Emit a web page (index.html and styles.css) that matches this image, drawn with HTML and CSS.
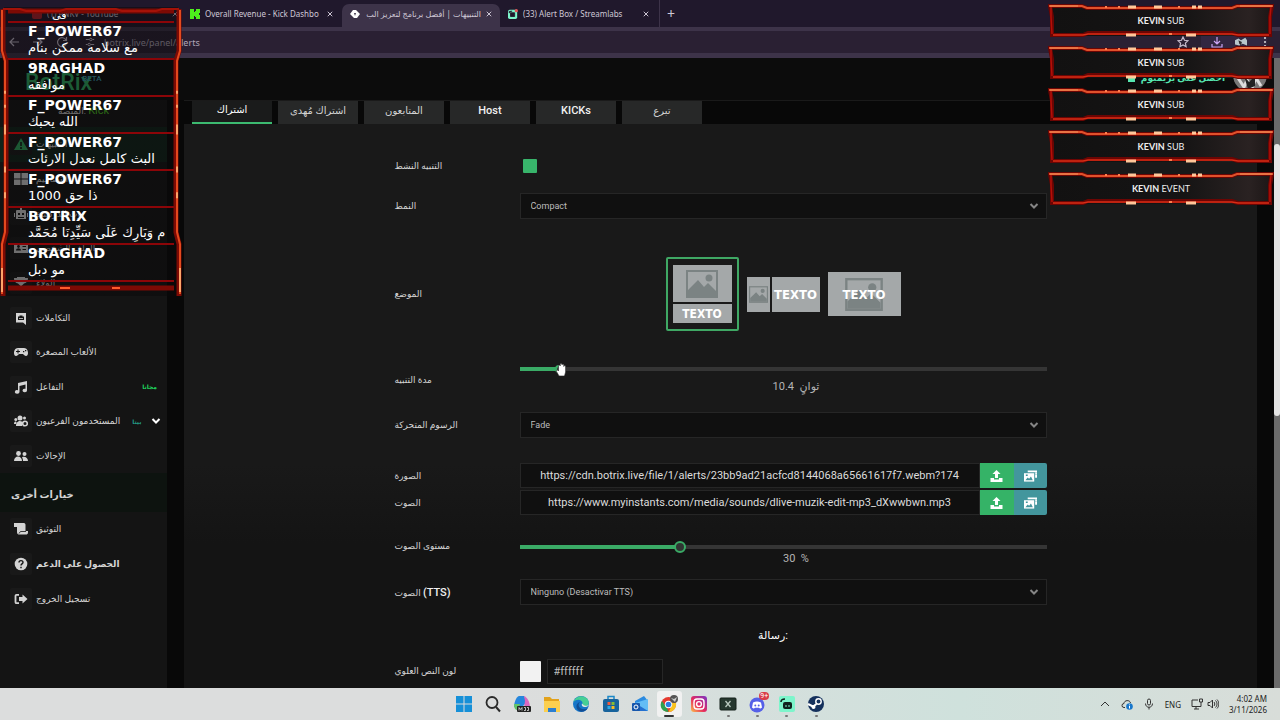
FILE: index.html
```
<!DOCTYPE html>
<html lang="ar">

<head>
  <meta charset="utf-8">
  <title>BotRix</title>
  <link rel="stylesheet" href="styles.css">
</head>

<body>
  <!-- shared shapes -->
  <svg class="defs" width="0" height="0">
    <symbol id="close" viewBox="0 0 8 8"><path d="M1 1l6 6M7 1l-6 6" stroke="currentColor" stroke-width="1.3"/></symbol>
    <symbol id="chevron" viewBox="0 0 10 8"><path d="M1.5 2l3.500 3.500L8.500 2" fill="none" stroke="currentColor" stroke-width="2"/></symbol>
    <symbol id="picture" viewBox="0 0 32 28"><rect x="1" y="1" width="30" height="26" fill="none" stroke="#7b8383" stroke-width="2"/><circle cx="23" cy="8" r="3.500" fill="#7b8383"/><path d="M2 25V20L12 10l6 7 4-4 8 8v5H2z" fill="#7b8383"/></symbol>
    <symbol id="upload" viewBox="0 0 12 12"><path d="M6 0l4 4H7.500v4h-3V4H2zM0 8h3.500v1.500h5V8H12v4H0z" fill="#fff"/></symbol>
    <symbol id="media" viewBox="0 0 14 12"><path d="M4 0h10v8h-2V2H4z" fill="#fff"/><path d="M0 3h11v9H0z" fill="#fff"/><path d="M1.500 10.500l2.500-3 1.500 1.500 2-2.500 2 4zM2 4.500h2v1.500H2zM12.500 2h.8v1h-.8zm0 2h.8v1h-.8z" fill="#43969d"/></symbol>
    <symbol id="frame" viewBox="0 0 226 36" preserveAspectRatio="none">
      <path d="M2 3H34l5 2H184l5-2H224L222 14V32H190l-6-2H40l-5 2H4V14z" fill="none" stroke="#6c0503" stroke-width="4"/>
      <path d="M3 4V14L4 31M223 4l-1 10v17" stroke="#b30f08" stroke-width="1.500" fill="none"/>
      <path d="M1 3H34l5 2H184l5-2H225" fill="none" stroke="#e0512b" stroke-width="2"/>
      <path d="M5 32H35l5-1H184l6 1H221" fill="none" stroke="#d92d16" stroke-width="1.500"/>
      <path d="M2 3H30M192 3H224" stroke="#f0955c" stroke-width="1"/>
      <path d="M80 4h8M106 4h8M144 4h4M150 4h4M78 32h10M138 32h10" stroke="#ffc79a" stroke-width="3"/>
      <path d="M57 4h2M70 4h2M130 4h2M121 31h3" stroke="#ff7d4d" stroke-width="2"/>
    </symbol>
  </svg>

  <div class="tabstrip">
    <div class="btab first"><i class="fav red"></i><span class="btitle">(1) PNKV - YouTube</span><svg class="x"><use href="#close"/></svg></div>
    <div class="btab second">
      <svg class="fav" viewBox="0 0 10 10"><path d="M0 0h4v3h1V2h1V0h4v4H9v2h1v4H6V8H5V7H4v3H0z" fill="#4df01c"/></svg>
      <span class="btitle">Overall Revenue - Kick Dashbo</span><svg class="x"><use href="#close"/></svg>
    </div>
    <div class="btab active">
      <svg class="fav" viewBox="0 0 10 10"><path d="M3 1h3l4 4-3 4H4L0 5z" fill="#fff"/><path d="M4 4l2 0-1 3z" fill="#3d3349"/></svg>
      <span class="btitle" dir="rtl">التنبيهات | أفضل برنامج لتعزيز الب</span><svg class="x"><use href="#close"/></svg>
    </div>
    <div class="btab fourth">
      <svg class="fav" viewBox="0 0 12 12"><rect y="1" width="11" height="11" rx="2" fill="#7df5cb"/><path d="M3 4.500h5v4.500H3zM1.500 5V3L5 2.500" fill="#20182c" stroke="#20182c"/><circle cx="10" cy="2" r="2" fill="#e0565b"/></svg>
      <span class="btitle">(33) Alert Box / Streamlabs</span><svg class="x"><use href="#close"/></svg>
    </div>
    <button class="newtab" aria-label="New tab">+</button>
  </div>

  <div class="toolbar">
    <svg viewBox="0 0 12 12"><path d="M11 6H2M6 2L2 6l4 4" class="line"/></svg>
    <svg viewBox="0 0 12 12"><path d="M1 6h9M6 2l4 4-4 4" class="line"/></svg>
    <svg viewBox="0 0 12 12"><path d="M10 4a4.500 4.500 0 1 0 .5 3M10.500 1v3.500H7" class="line"/></svg>
    <svg class="tune" viewBox="0 0 12 12"><path d="M1 3h4M9 3h2M1 9h2M7 9h4" class="line"/><circle cx="7" cy="3" r="1.500" class="line"/><circle cx="5" cy="9" r="1.500" class="line"/></svg>
    <input class="url" type="text" aria-label="Address" value="botrix.live/panel/alerts">
    <svg class="star" viewBox="0 0 12 12"><path d="M6 1l1.500 3.300 3.500.4-2.600 2.400.7 3.500L6 8.900l-3.100 1.700.7-3.500L1 4.700l3.500-.4z" class="line"/></svg>
    <div class="chip">
      <svg viewBox="0 0 12 12"><path d="M6 1v7M3 5l3 3 3-3M1 8v3h10V8" class="line violet"/></svg>
      <svg viewBox="0 0 14 10"><path d="M0 3l4-2 3 2 5-3 2 3v6l-5-2-4 2-5-1z" fill="#b9c7cb"/><path d="M4 3l4 2-1 4-2-2z" fill="#2a2a2e"/></svg>
      <svg class="dots" viewBox="0 0 4 12"><circle cx="2" cy="2" r="1" fill="#ddd"/><circle cx="2" cy="6" r="1" fill="#ddd"/><circle cx="2" cy="10" r="1" fill="#ddd"/></svg>
    </div>
  </div>

  <div class="page">
    <aside class="sidebar">
      <div class="brand">BotRix<sup>BETA</sup></div>
      <div class="platform">المنصة: <b>Kick</b></div>
      <nav class="menu">
        <a href="#" class="item current"><svg viewBox="0 0 14 14"><path d="M7 1l7 12H0z" fill="#2fa75c"/><path d="M7 5v4M7 10v2" stroke="#111" stroke-width="1.500"/></svg><span>التنبيهات</span></a>
        <a href="#" class="item"><svg viewBox="0 0 14 14"><path d="M0 1h6.500v5.500H0zM7.500 1H14v5.500H7.500zM0 7.500h6.500V13H0zM7.500 7.500H14V13H7.500z"/></svg><span>التصاميم</span></a>
        <a href="#" class="item"><svg viewBox="0 0 14 14"><path d="M6 1h2v2h3a1 1 0 0 1 1 1v8H2V4a1 1 0 0 1 1-1h3zM0 6h1v4H0zM13 6h1v4h-1z"/><path d="M4 6h2v2H4zM8 6h2v2H8zM4 10h6v1H4z" fill="#151515"/></svg><span>بوت الدردشة</span></a>
        <a href="#" class="item"><svg viewBox="0 0 14 14"><path d="M0 2h14v10H0z"/><path d="M2 9.500h5c0-3-5-3-5 0zM8.500 5H12v1H8.500zM8.500 8H12v1H8.500z" fill="#151515"/><circle cx="4.500" cy="5.500" r="1.400" fill="#151515"/></svg><span>الملف الشخصي</span></a>
        <a href="#" class="item"><svg viewBox="0 0 14 14"><path d="M3 1h8v1h3c0 4-2 5-4 5.500L8 9.500V12h2v1H4v-1h2V9.500L4 7.500C2 7 0 6 0 2h3z"/></svg><span>الولاء</span></a>
        <a href="#" class="item"><svg viewBox="0 0 14 14"><path d="M2 2h10v12l-3-2.500H2z"/><path d="M4 5.500h1.500V4.500h3v1H10V9H4z" fill="#151515"/><path d="M5 7h4v.8H5z"/></svg><span>التكاملات</span></a>
        <a href="#" class="item"><svg viewBox="0 0 14 14"><path d="M4 3h6c3 0 4 3 4 5 0 3-2 4-4 2L9 9H5l-1 1c-2 2-4 1-4-2 0-2 1-5 4-5z"/><path d="M3.500 4.500h1V6H6v1H4.500v1.500h-1V7H2V6h1.500zM9 6h1.300v1.300H9zM11 5h1.300v1.300H11z" fill="#151515"/></svg><span>الألعاب المصغرة</span></a>
        <a href="#" class="item"><svg viewBox="0 0 14 14"><path d="M4 3l9-2v9.500a2.200 1.800 0 1 1-1.500-1.700V4.500L5.500 6v6a2.300 1.800 0 1 1-1.500-1.700z"/></svg><span>التفاعل</span><small class="free">مجانا</small></a>
        <a href="#" class="item"><svg viewBox="0 0 14 14"><circle cx="6" cy="4" r="2.500"/><circle cx="1.800" cy="5.500" r="1.500"/><circle cx="10.500" cy="4" r="1.500"/><path d="M2 12c0-6 6-6 7-3l-1 3zM0 10c0-2 1-3 2.500-2L2 10z"/><circle cx="11" cy="9.500" r="2.300" fill="none" stroke="#d4d4d4" stroke-width="1.600"/></svg><span>المستخدمون الفرعيون</span><small class="beta">بيتا</small><svg class="more"><use href="#chevron"/></svg></a>
        <a href="#" class="item"><svg viewBox="0 0 14 14"><circle cx="4.500" cy="4.500" r="2.400"/><circle cx="10.500" cy="5" r="2"/><path d="M0 12c0-6 8-6 8 0zM9 12c0-2-.5-3-1-3.800C11 7 14 9 14 12z"/></svg><span>الإحالات</span></a>
        <h2 class="group">خيارات أخرى</h2>
        <a href="#" class="item"><svg viewBox="0 0 14 14"><path d="M0 1h10c1 0 1.500 1 1.500 2v6H14v1.500c0 1.500-1 2-2 2H5.500C4 12.500 3 12 3 10V5H0z"/><path d="M5 11.500l1.500-2H12" stroke="#151515" stroke-width=".8" fill="none"/></svg><span>التوثيق</span></a>
        <a href="#" class="item"><svg viewBox="0 0 14 14"><circle cx="7" cy="7" r="6.300"/><path d="M5 5.500c0-2.500 4-2.500 4-.2C9 7 7 6.800 7 8.500M7 9.700v1.500" stroke="#151515" stroke-width="1.400" fill="none"/></svg><span class="strong">الحصول على الدعم</span></a>
        <a href="#" class="item"><svg viewBox="0 0 14 14"><path d="M5 2.800H2.500c-1 0-1 .5-1 1v6.400c0 .6 0 1 1 1H5" fill="none" stroke="#d4d4d4" stroke-width="1.800"/><path d="M5 5h3.500V2.500L13.500 7l-5 4.500V9H5z"/></svg><span>تسجيل الخروج</span></a>
      </nav>
    </aside>

    <div class="content">
      <header class="topbar">
        <a href="#" class="support"><i></i>احصل على بريميوم</a>
        <svg class="avatar" viewBox="0 0 34 34"><circle cx="17" cy="17" r="17" fill="#777"/><path d="M5 20l6 9 3-7 5 8 4-10 5 8" fill="none" stroke="#ddd" stroke-width="3"/><path d="M11 18l5 6 6-6v10l-7 3z" fill="#222"/></svg>
      </header>
      <div class="tabs">
        <button class="tab on">اشتراك</button>
        <button class="tab">اشتراك مُهدى</button>
        <button class="tab">المتابعون</button>
        <button class="tab latin">Host</button>
        <button class="tab latin">KICKs</button>
        <button class="tab">تبرع</button>
      </div>
      <form class="panel">
        <div class="row">
          <label for="enabled">التنبيه النشط</label>
          <div class="field"><input type="checkbox" id="enabled" class="check" checked></div>
        </div>
        <div class="row">
          <label for="style">النمط</label>
          <div class="field pick"><select id="style"><option>Compact</option></select><svg class="arrow"><use href="#chevron"/></svg></div>
        </div>
        <div class="row position">
          <span class="name" id="pos">الموضع</span>
          <div class="field layouts" role="radiogroup" aria-labelledby="pos">
            <label class="layout stacked"><input type="radio" name="pos" aria-label="Top" checked><span class="pic"><svg><use href="#picture"/></svg></span><span class="txt">TEXTO</span></label>
            <label class="layout side"><input type="radio" name="pos" aria-label="Side"><span class="pic"><svg><use href="#picture"/></svg></span><span class="txt">TEXTO</span></label>
            <label class="layout over"><input type="radio" name="pos" aria-label="Over"><svg><use href="#picture"/></svg><span class="txt">TEXTO</span></label>
          </div>
        </div>
        <div class="row duration">
          <label for="duration">مدة التنبيه</label>
          <div class="field slider">
            <input type="range" id="duration" min="0" max="150" step="0.1" value="10.4" style="--fill: 8%">
            <output>10.4 &nbsp;ثوانٍ</output>
            <svg class="hand" viewBox="0 0 12 14"><path d="M3 13L.5 8.500C0 7 1.500 6.500 2.500 8V3c0-1.500 1.700-1.500 1.700 0V1.500c0-1.500 1.800-1.500 1.800 0V2c0-1.300 1.800-1.300 1.800 0v1.500c0-1.300 1.800-1.200 1.800.2V9l-1.100 4z" fill="#fff" stroke="#222" stroke-width=".6"/></svg>
          </div>
        </div>
        <div class="row animation">
          <label for="animation">الرسوم المتحركة</label>
          <div class="field pick"><select id="animation"><option>Fade</option></select><svg class="arrow"><use href="#chevron"/></svg></div>
        </div>
        <div class="row image">
          <label for="image">الصورة</label>
          <div class="field file">
            <input type="text" id="image" value="https://cdn.botrix.live/file/1/alerts/23bb9ad21acfcd8144068a65661617f7.webm?174">
            <button type="button" class="up" aria-label="Upload image"><svg><use href="#upload"/></svg></button>
            <button type="button" class="lib" aria-label="Image library"><svg><use href="#media"/></svg></button>
          </div>
        </div>
        <div class="row sound">
          <label for="sound">الصوت</label>
          <div class="field file">
            <input type="text" id="sound" value="https://www.myinstants.com/media/sounds/dlive-muzik-edit-mp3_dXwwbwn.mp3">
            <button type="button" class="up" aria-label="Upload sound"><svg><use href="#upload"/></svg></button>
            <button type="button" class="lib" aria-label="Sound library"><svg><use href="#media"/></svg></button>
          </div>
        </div>
        <div class="row volume">
          <label for="volume">مستوى الصوت</label>
          <div class="field slider">
            <input type="range" id="volume" min="0" max="100" value="30" style="--fill: 30%">
            <output>30 &nbsp;%</output>
          </div>
        </div>
        <div class="row tts">
          <label for="tts">الصوت <span class="latin">(TTS)</span></label>
          <div class="field pick"><select id="tts"><option>Ninguno (Desactivar TTS)</option></select><svg class="arrow"><use href="#chevron"/></svg></div>
        </div>
        <div class="row message"><h3>رسالة:</h3></div>
        <div class="row">
          <label for="color">لون النص العلوي</label>
          <div class="field color"><button type="button" class="swatch" aria-label="Pick color"></button><input type="text" id="color" value="#ffffff"></div>
        </div>
      </form>
    </div>
    <div class="scrollbar"><div class="thumb"></div></div>
  </div>

  <footer class="taskbar">
    <div class="apps">
      <button aria-label="Start"><svg viewBox="0 0 18 18"><path d="M1 1h7.500v7.500H1zM9.500 1H17v7.500H9.500zM1 9.500h7.500V17H1zM9.500 9.500H17V17H9.500z" fill="#1690d8"/></svg></button>
      <button aria-label="Search"><svg viewBox="0 0 18 18"><circle cx="8" cy="7.500" r="5.500" fill="none" stroke="#2a2a2a" stroke-width="1.800"/><path d="M12 12l4 4.500" stroke="#2a2a2a" stroke-width="2"/></svg></button>
      <button aria-label="Copilot"><svg viewBox="0 0 18 18"><path d="M6 1h5l3 6-5 5H1C1 8 3 2 6 1z" fill="#2686dc"/><path d="M11 1c3 1 6 6 6 11l-6 1 1-7z" fill="#d968c0"/><path d="M1 9h6l-2 6c-3 0-4-2-4-6z" fill="#62c46a"/><rect x="4" y="11" width="14" height="6" rx="1" fill="#222"/><path d="M6 15.500v-3l1.500 2 1.500-2v3M11 12.500h1.500v3H11M14 12.500h1.500v3H14" stroke="#fff" stroke-width=".7" fill="none"/></svg></button>
      <button aria-label="Files"><svg viewBox="0 0 18 18"><path d="M1 2h6l2 2h7v12H1z" fill="#e2a21c"/><path d="M1 6h16v11H1z" fill="#fbcf4f"/><path d="M5 13h8v4H5z" fill="#2c7fd0"/></svg></button>
      <button aria-label="Edge"><svg viewBox="0 0 18 18"><circle cx="9" cy="9" r="8" fill="#1676c9"/><path d="M1.500 7C3 1 11-1 15.500 4c2 3 2 7-2.500 7.500-3 0-3-1-2.500-3C11 5 5 3 1.500 7z" fill="#46cf95"/><path d="M8 7c-3 3-1 8 6 7l2-1c-2 3-6 5-9 3-4-3-3-8 1-9z" fill="#114e96"/><path d="M10 8.500c-1 2 1 4 4 3.500 2-.5 3-2 3-3-1 2-4 3-7-.5z" fill="#dce2e1"/></svg></button>
      <button aria-label="Store"><svg viewBox="0 0 18 18"><path d="M6 5V1.500h6V5" fill="none" stroke="#1b88c8" stroke-width="1.500"/><rect x="1" y="4" width="16" height="13" rx="2" fill="#17639c"/><path d="M5.500 7h3v3h-3z" fill="#ef5a3c"/><path d="M9.500 7h3v3h-3z" fill="#86bd33"/><path d="M5.500 11h3v3h-3z" fill="#2daae6"/><path d="M9.500 11h3v3h-3z" fill="#f9bd20"/></svg></button>
      <button aria-label="Outlook"><svg viewBox="0 0 18 18"><path d="M4 6l9-5 4 5v10H4z" fill="#2c8be0"/><path d="M4 8l13-4v12H6z" fill="#63bdf5"/><path d="M4 8l13 8H4z" fill="#2470d0"/><rect x="1" y="8" width="8" height="8" rx="1" fill="#1757ac"/><circle cx="5" cy="12" r="2" fill="none" stroke="#fff"/></svg></button>
      <button class="front" aria-label="Chrome"><svg viewBox="0 0 18 18"><circle cx="8.500" cy="9.500" r="7.500" fill="#e5392f"/><path d="M2 6l5.500 8 1 3C1 17-1 10 2 6z" fill="#2fa04f"/><path d="M16 8c1 5-3 9-7.500 9l3.500-7 0-3z" fill="#f9c31f"/><circle cx="8.500" cy="9.500" r="3.700" fill="#fff"/><circle cx="8.500" cy="9.500" r="2.800" fill="#2f7de1"/><circle cx="14" cy="4" r="4" fill="#555"/><path d="M11 3l3 1 3-2-2 5z" fill="#ccc"/></svg></button>
      <button aria-label="Instagram"><svg viewBox="0 0 18 18"><defs><linearGradient id="ig" x1="0" y1="1" x2="1" y2="0"><stop offset="0" stop-color="#fdc04b"/><stop offset=".45" stop-color="#e5295f"/><stop offset="1" stop-color="#7a35c6"/></linearGradient></defs><rect x="1" y="1" width="16" height="16" rx="3" fill="url(#ig)"/><rect x="4" y="4" width="10" height="10" rx="3" fill="none" stroke="#fff" stroke-width="1.400"/><circle cx="9" cy="9" r="2.400" fill="none" stroke="#fff" stroke-width="1.400"/></svg></button>
      <button class="open" aria-label="Xsplit"><svg viewBox="0 0 18 18"><rect x="1" y="3" width="16" height="12" rx="1" fill="#26382f" stroke="#14201a"/><path d="M6.500 6l5 6M11.500 6l-5 6" stroke="#b9c9bf" stroke-width="1.300"/></svg></button>
      <button class="open" aria-label="Discord"><svg viewBox="0 0 18 18"><circle cx="8" cy="10" r="7.500" fill="#5661e8"/><path d="M4 7.500c3-1.500 5-1.500 8 0l1 5c-2 1.500-2 1-3 .2H6c-1 .8-1 1.300-3-.2z" fill="#fff"/><circle cx="6.300" cy="10.500" r="1" fill="#5661e8"/><circle cx="9.700" cy="10.500" r="1" fill="#5661e8"/></svg><span class="count">9+</span></button>
      <button class="open" aria-label="Streamlabs"><svg viewBox="0 0 18 18"><rect x="1" y="1" width="16" height="16" rx="2" fill="#7df5cb"/><rect x="5" y="7" width="9" height="7" rx="2" fill="#10231e"/><path d="M3 7c0-2 2-3 4-3" stroke="#10231e" stroke-width="1.600" fill="none"/><path d="M8 10v2M11 10v2" stroke="#7df5cb"/></svg></button>
      <button class="open" aria-label="Steam"><svg viewBox="0 0 18 18"><circle cx="9" cy="9" r="8" fill="#14305c"/><circle cx="11.500" cy="6.500" r="2.700" fill="none" stroke="#fff" stroke-width="1.400"/><path d="M1 9l5 2.500L9.500 9" stroke="#fff" stroke-width="2" fill="none"/><circle cx="6.500" cy="12" r="2" fill="#fff"/></svg></button>
    </div>
    <div class="tray">
      <svg viewBox="0 0 12 12"><path d="M2 8l4-4 4 4" class="ink"/></svg>
      <svg viewBox="0 0 12 12"><path d="M4 9.500H3a2 2 0 0 1 0-4C3 2 9 1.500 9.500 5" class="ink"/><circle cx="8.500" cy="8.500" r="3.300" fill="#1878cc"/><path d="M8.500 6.500v.8M8.500 8v2.500" stroke="#fff"/></svg>
      <svg viewBox="0 0 12 12"><rect x="4.500" y="1" width="3" height="6" rx="1.500" class="ink"/><path d="M2.500 5.500c0 5 7 5 7 0M6 9v2.500" class="ink"/></svg>
      <span class="lang">ENG</span>
      <svg viewBox="0 0 12 12"><path d="M7 2H1v6.500h9V6M3 11h5M5 8.500V11M8.500 1h3v3h-3zM10 4v2" class="ink"/></svg>
      <svg viewBox="0 0 12 12"><path d="M1 4.500h2L5.500 2v8L3 7.500H1zM7 4c1 1 1 3 0 4M8.500 2.500c2 2 2 5 0 7M10 1.500c2.500 3 2.500 6 0 9" class="ink"/></svg>
      <time class="clock">4:02 AM<br>3/11/2026</time>
    </div>
  </footer>

  <!-- stream overlays -->
  <section class="chat">
    <svg class="chatframe" viewBox="0 0 182 290" preserveAspectRatio="none">
      <path d="M8 4H174M3 2V44L6 54V226L3 238V290M179 2V44L176 54V226L179 238V290M8 282H174" fill="none" stroke="#7c0a04" stroke-width="5"/>
      <path d="M2 3V44L5 54V226L2 238V288M180 3V44L177 54V226L180 238V288" fill="none" stroke="#e4491e" stroke-width="2"/>
      <path d="M3 2H20L26 4H60L66 2H116L122 4H156L162 2H179" fill="none" stroke="#a51208" stroke-width="2"/>
      <path d="M5 84v3M5 98v3M5 118v10M5 160v6M5 186v6M2 262v24M177 84v3M177 98v3M177 118v10M177 160v6M177 186v6M180 262v24" stroke="#ffa468" stroke-width="2"/>
      <path d="M60 282h10M112 282h8" stroke="#ff5b2b" stroke-width="2"/>
    </svg>
    <div class="msg cut"><p dir="rtl">في</p></div>
    <div class="msg"><b>F_POWER67</b><p dir="rtl">مع سلامه ممكن بنام</p></div>
    <div class="msg"><b>9RAGHAD</b><p dir="rtl">موافقه</p></div>
    <div class="msg"><b>F_POWER67</b><p dir="rtl">الله يحبك</p></div>
    <div class="msg"><b>F_POWER67</b><p dir="rtl">البث كامل نعدل الارئات</p></div>
    <div class="msg"><b>F_POWER67</b><p dir="rtl">ذا حق 1000</p></div>
    <div class="msg"><b>BOTRIX</b><p dir="rtl">م وَبَارِك عَلَى سَيِّدِنَا مُحَمَّد</p></div>
    <div class="msg"><b>9RAGHAD</b><p dir="rtl">مو دبل</p></div>
  </section>

  <section class="alerts">
    <div class="alert"><svg><use href="#frame"/></svg><b>KEVIN</b> SUB</div>
    <div class="alert"><svg><use href="#frame"/></svg><b>KEVIN</b> SUB</div>
    <div class="alert"><svg><use href="#frame"/></svg><b>KEVIN</b> SUB</div>
    <div class="alert"><svg><use href="#frame"/></svg><b>KEVIN</b> SUB</div>
    <div class="alert"><svg><use href="#frame"/></svg><b>KEVIN</b> EVENT</div>
  </section>
</body>

</html>
```
FILE: styles.css
```
* {
  box-sizing: border-box;
}

body {
  margin: 0;
  height: 100vh;
  display: flex;
  flex-direction: column;
  overflow: hidden;
  position: relative;
  background: #080808;
  color: #d4d4d4;
  font-family: Roboto, "DejaVu Sans", sans-serif;
  font-size: 9px;
}

button,
input,
select {
  font-family: inherit;
  font-size: inherit;
  color: inherit;
  margin: 0;
  padding: 0;
  border: 0;
  background: none;
}

a {
  color: inherit;
  text-decoration: none;
}

.defs {
  position: absolute;
}

/* browser */
.tabstrip {
  display: flex;
  height: 27px;
  background: #20182c;
  color: #cfc8d6;
  font-family: "Noto Sans", "DejaVu Sans", sans-serif;
  font-size: 8px;
}

.btab {
  display: flex;
  align-items: center;
  gap: 5px;
  padding: 0 6px;
}

.btitle {
  flex: 1;
  overflow: hidden;
  white-space: nowrap;
}

.fav {
  width: 10px;
  height: 10px;
  flex: none;
}

.red {
  background: #b3202c;
  border-radius: 2px;
}

.x {
  width: 6px;
  height: 6px;
  flex: none;
}

.first {
  width: 184px;
  padding-left: 32px;
}

.second {
  width: 158px;
  padding-right: 9px;
}

.active {
  width: 158px;
  margin-top: 4px;
  padding: 0 8px 4px;
  border-radius: 7px 7px 0 0;
  background: #3d3349;
}

.fourth {
  width: 160px;
  padding: 0 10px 0 8px;
  border-right: 1px solid #3d3349;
}

.newtab {
  width: 22px;
  font-size: 14px;
}

.toolbar {
  display: flex;
  align-items: center;
  gap: 12px;
  height: 31px;
  padding: 0 13px 0 8px;
  background: #2a2033;
  border-top: 4px solid #3d3349;
  border-bottom: 5px solid #3d3349;
}

.toolbar svg {
  width: 12px;
  height: 12px;
  flex: none;
}

.toolbar .tune {
  margin-left: 5px;
  width: 10px;
}

.line {
  fill: none;
  stroke: #c6bccd;
  stroke-width: 1.2;
}

.violet {
  stroke: #c9a4f2;
}

.url {
  flex: 1;
  margin-left: -3px;
  font-family: "Noto Sans", sans-serif;
  font-size: 9px;
  color: #b0a7b8;
}

.chip {
  display: flex;
  align-items: center;
  gap: 12px;
  height: 22px;
  padding-left: 10px;
  background: #322741;
}

.toolbar .dots {
  width: 4px;
  margin-left: 4px;
}

/* page */
.page {
  flex: 1;
  min-height: 0;
  display: flex;
  background: #080808;
}

.sidebar {
  width: 167px;
  display: flex;
  flex-direction: column;
  background: #141414;
}

.brand {
  height: 42px;
  padding: 6px 0 0 25px;
  background: #0c0c0c;
  color: #2fae62;
  font-size: 23px;
  font-weight: 500;
  line-height: 30px;
  white-space: nowrap;
}

.brand sup {
  font-size: 8px;
  color: #3a9fb5;
  margin-left: -10px;
}

.platform {
  height: 27px;
  padding-left: 58px;
  line-height: 22px;
}

.platform b {
  color: #4dc320;
  font-size: 11px;
  font-weight: 400;
}

.menu {
  flex: 1;
  display: flex;
  flex-direction: column;
  padding-bottom: 72px;
}

.item {
  flex: 1;
  display: flex;
  align-items: center;
  gap: 4px;
  padding: 0 6px 0 10px;
  white-space: nowrap;
}

.item > svg {
  flex: none;
  width: 22px;
  height: 22px;
  padding: 4px;
  background: #191919;
  border-radius: 2px;
  fill: #d4d4d4;
}

.current {
  background: #10241a;
}

.item small {
  margin-left: auto;
  padding-right: 4px;
  font-size: 6px;
  font-weight: 700;
}

.free {
  color: #1fd35c;
}

.item .beta {
  color: #239a84;
  margin-left: 8px;
}

.item .more {
  margin-left: auto;
  width: 10px;
  height: 8px;
  padding: 0;
  background: none;
  color: #fff;
}

.strong {
  font-weight: 700;
}

.group {
  flex: 1;
  display: flex;
  align-items: center;
  margin: 0;
  padding: 4px 0 0 11px;
  background: #0d130f;
  font-size: 10px;
}

.content {
  flex: 1;
  display: flex;
  flex-direction: column;
  min-width: 0;
}

.topbar {
  height: 42px;
  flex: none;
  display: flex;
  justify-content: flex-end;
  align-items: flex-start;
  gap: 8px;
  padding-right: 7px;
  background: #0c0c0c;
}

.support {
  display: flex;
  align-items: center;
  gap: 6px;
  margin-top: 15px;
  color: #56e6b0;
  font-weight: 700;
}

.support i {
  width: 7px;
  height: 7px;
  background: #56e6b0;
}

.avatar {
  width: 34px;
  height: 34px;
  flex: none;
}

.tabs {
  flex: none;
  display: flex;
  gap: 6px;
  height: 24px;
  margin: 0 17px;
  padding-left: 8px;
  border-top: 1px solid #1a1a1a;
}

.tab {
  width: 80px;
  padding-bottom: 4px;
  background: #272828;
  font-size: 10px;
}

.tab.on {
  background: #1a1b1b;
  border-bottom: 2px solid #3cba70;
  color: #fff;
}

.latin,
.tab.latin {
  font-size: 11px;
  font-weight: 500;
  color: #f0f0f0;
}

.panel {
  flex: 1;
  margin: 0 17px;
  padding-top: 22px;
  background: linear-gradient(#191919 0, #191919 340px, #141414 420px);
  overflow: hidden;
}

.row {
  display: grid;
  grid-template-columns: 125px 1fr;
  align-items: center;
  width: 60%;
  min-width: 652px;
  height: 40px;
  margin: 0 auto;
}

.check {
  appearance: none;
  display: block;
  width: 14px;
  height: 14px;
  margin-left: 3px;
  border-radius: 1px;
}

.check:checked {
  background: #38b56b;
}

.pick {
  display: grid;
  align-items: center;
}

.pick select,
.pick .arrow {
  grid-area: 1 / 1;
}

select {
  appearance: none;
  width: 100%;
  height: 26px;
  padding-left: 10px;
  border: 1px solid #262626;
  background: #101010;
  color: #bdbdbd;
}

.arrow {
  justify-self: end;
  width: 10px;
  height: 8px;
  margin-right: 8px;
  color: #858585;
  pointer-events: none;
}

.position {
  height: 136px;
}

.layouts {
  display: flex;
  justify-content: center;
  align-items: center;
  gap: 8px;
}

.layout {
  display: grid;
  position: relative;
  width: 73px;
  gap: 2px;
}

.layout input {
  position: absolute;
  inset: 0;
  opacity: 0;
}

.pic,
.txt {
  display: flex;
  align-items: center;
  justify-content: center;
  background: #a4a8a9;
}

.txt {
  color: #fff;
  font-family: "DejaVu Sans Condensed", "Open Sans", sans-serif;
  font-weight: 800;
  font-size: 13px;
}

.stacked {
  height: 74px;
  padding: 6px 5px;
  grid-template-rows: 37px 19px;
  align-content: center;
  border: 2px solid #3fa864;
  border-radius: 2px;
}

.stacked .txt {
  font-size: 12px;
}

.stacked svg {
  width: 32px;
  height: 28px;
}

.side {
  height: 35px;
  grid-template-columns: 23px 1fr;
}

.side svg {
  width: 19px;
  height: 17px;
}

.over {
  height: 44px;
  place-items: center;
  background: #a4a8a9;
}

.over svg,
.over .txt {
  grid-area: 1 / 1;
  background: none;
}

.over svg {
  width: 38px;
  height: 33px;
}

.over .txt {
  z-index: 1;
}

.duration {
  height: 36px;
}

.slider {
  display: flex;
  flex-direction: column;
  align-items: center;
  position: relative;
}

.slider output {
  padding: 2px 0 0 26px;
  font-size: 11px;
  line-height: 20px;
  color: #b5b5b5;
}

input[type="range"] {
  appearance: none;
  width: 100%;
  height: 12px;
}

input[type="range"]::-webkit-slider-runnable-track {
  height: 4px;
  background: linear-gradient(to right, #3aab66 var(--fill), #353535 var(--fill));
}

input[type="range"]::-webkit-slider-thumb {
  appearance: none;
  width: 12px;
  height: 12px;
  margin-top: -4px;
  border: 2px solid #3aab66;
  border-radius: 50%;
  background: #303533;
}

.hand {
  position: absolute;
  left: 7%;
  top: 0;
  width: 12px;
  height: 14px;
}

#duration::-webkit-slider-thumb {
  width: 8px;
  height: 8px;
  margin-top: -2px;
}

.animation {
  height: 54px;
}

.image,
.sound {
  height: 27px;
}

.image {
  margin-top: 10px;
}

.file {
  display: flex;
}

.file input {
  flex: 1;
  min-width: 0;
  height: 25px;
  border: 1px solid #262626;
  background: #101010;
  text-align: center;
  font-size: 11px;
  color: #dcdcdc;
}

.file button {
  display: flex;
  align-items: center;
  justify-content: center;
  width: 34px;
  height: 25px;
}

.file svg {
  width: 13px;
  height: 12px;
}

.up {
  background: #35b367;
}

.file .lib {
  width: 33px;
  background: #43969d;
  border-radius: 0 2px 2px 0;
}

.volume {
  height: 24px;
  margin-top: 25px;
  align-items: start;
}

.volume output {
  padding-top: 0;
  line-height: 12px;
}

.tts {
  height: 54px;
}

.message {
  height: 32px;
}

.message h3 {
  grid-column: 2;
  margin: 0;
  padding-right: 20px;
  text-align: center;
  font-size: 11px;
  font-weight: 400;
  color: #fff;
}

.color {
  display: flex;
  align-items: center;
  gap: 6px;
}

.swatch {
  width: 21px;
  height: 21px;
  border-radius: 1px;
  background: #f2f2f2;
}

.color input {
  width: 116px;
  height: 25px;
  padding-left: 6px;
  border: 1px solid #262626;
  background: #101010;
  font-size: 11px;
  color: #bdbdbd;
}

.scrollbar {
  width: 6px;
  padding-top: 86px;
  background: #6b6b6b;
}

.thumb {
  height: 50%;
  border-radius: 3px;
  background: #e4e4e4;
}

/* taskbar */
.taskbar {
  display: grid;
  grid-template-columns: 1fr 382px 1fr;
  height: 32px;
  background: linear-gradient(to right, #dcdddd 40%, #cfe1dc 75%, #d8ddd9);
  color: #222;
}

.apps {
  grid-column: 2;
  display: grid;
  grid-template-columns: repeat(13, 1fr);
}

.apps button {
  display: flex;
  align-items: center;
  justify-content: center;
  position: relative;
  margin: 3px 2px;
  border-radius: 3px;
}

.apps svg {
  width: 18px;
  height: 18px;
}

.front {
  background: #f1f1f1;
}

.open::after,
.front::after {
  content: "";
  position: absolute;
  bottom: 0;
  width: 3px;
  height: 2px;
  border-radius: 1px;
  background: #777;
}

.front::after {
  width: 10px;
  background: #333;
}

.count {
  position: absolute;
  top: 1px;
  right: 1px;
  padding: 0 1px;
  border-radius: 5px;
  background: #d93b48;
  color: #fff;
  font-size: 7px;
}

.tray {
  display: flex;
  justify-content: flex-end;
  align-items: center;
  gap: 10px;
  padding-right: 13px;
  font-family: "Noto Sans", sans-serif;
  font-size: 8px;
}

.tray svg {
  width: 12px;
  height: 12px;
}

.tray .lang + svg {
  margin-right: -6px;
}

.ink {
  fill: none;
  stroke: #333;
}

.clock {
  text-align: right;
  line-height: 11px;
}

/* chat overlay */
.chat {
  position: absolute;
  left: 0;
  top: 7px;
  width: 182px;
  height: 289px;
  padding: 0 8px;
  overflow: hidden;
  background: linear-gradient(to right, transparent 4px, rgba(10, 9, 10, 0.5) 4px, rgba(10, 9, 10, 0.5) 178px, transparent 178px);
  color: #fff;
  font-family: "DejaVu Sans", sans-serif;
}

.chatframe {
  position: absolute;
  left: 0;
  top: 0;
  width: 100%;
  height: 100%;
}

.msg {
  height: 37px;
  padding-left: 20px;
  border-bottom: 2px solid #8c0508;
  overflow: hidden;
  white-space: nowrap;
}

.cut {
  height: 16px;
  padding-left: 44px;
}

.msg b {
  display: block;
  font-size: 14px;
  line-height: 16px;
}

.msg p {
  margin: 0;
  width: fit-content;
  max-width: 100%;
  font-size: 13px;
  line-height: 17px;
}

.cut p {
  font-size: 11px;
}

/* alerts overlay */
.alerts {
  position: absolute;
  right: 6px;
  top: 3px;
  display: flex;
  flex-direction: column;
  gap: 6px;
  width: 226px;
}

.alert {
  position: relative;
  height: 36px;
  padding: 3px;
  text-align: center;
  font-family: Lato, sans-serif;
  font-size: 9px;
  line-height: 30px;
  color: #eee;
  background: linear-gradient(to right, #121111, #151414 60%, #2a2222 90%, #1c1616) content-box;
}

.alert svg {
  position: absolute;
  left: 0;
  top: 0;
  width: 100%;
  height: 100%;
}
```
